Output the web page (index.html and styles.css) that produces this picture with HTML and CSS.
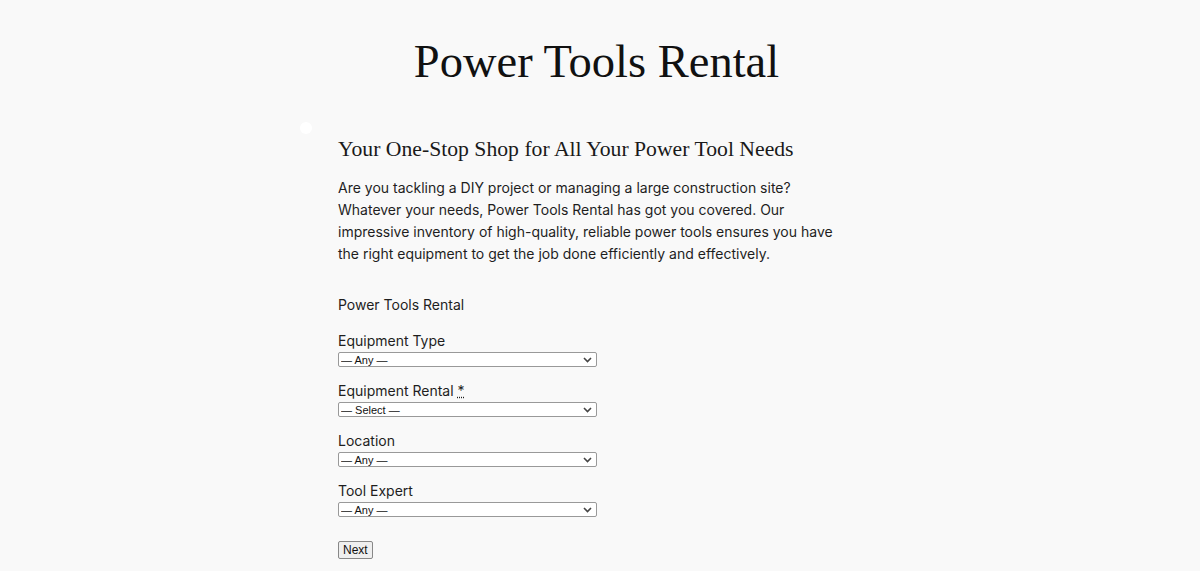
FILE: index.html
```html
<!DOCTYPE html>
<html lang="en">
<head>
	<meta charset="UTF-8">
	<title>Power Tools Rental</title>
	<link rel="stylesheet" href="styles.css">
</head>
<body>
	<header class="site-header">
		<h1 class="site-title">Power Tools Rental</h1>
	</header>
	<main class="content">
		<span class="dot"></span>
		<h2 class="tagline">Your One-Stop Shop for All Your Power Tool Needs</h2>
		<p class="intro">Are you tackling a DIY project or managing a large construction site? Whatever your needs, Power Tools Rental has got you covered. Our impressive inventory of high-quality, reliable power tools ensures you have the right equipment to get the job done efficiently and effectively.</p>

		<form class="rental-form">
			<fieldset>
				<legend>Power Tools Rental</legend>
				<div class="field">
					<label for="type">Equipment Type</label>
					<select id="type"><option>— Any —</option></select>
				</div>
				<div class="field">
					<label for="rental">Equipment Rental <abbr title="required">*</abbr></label>
					<select id="rental"><option>— Select —</option></select>
				</div>
				<div class="field">
					<label for="location">Location</label>
					<select id="location"><option>— Any —</option></select>
				</div>
				<div class="field">
					<label for="expert">Tool Expert</label>
					<select id="expert"><option>— Any —</option></select>
				</div>
			</fieldset>
			<button type="button" class="next">Next</button>
		</form>
	</main>
</body>
</html>
```

FILE: styles.css
```css
body, h1, h2, p, fieldset, legend{
	margin: 0;
	padding: 0;
}
body{
	background: #f9f9f9;
	color: #1e1e1e;
	font-family: Inter, "Liberation Sans", sans-serif;
	font-size: 14px;
}
.site-header{
	padding: 36px 7px 0 0;
	text-align: center;
}
.site-title{
	font-family: "Liberation Serif", serif;
	font-weight: normal;
	font-size: 46.5px;
	line-height: 52px;
	color: #111;
}
.content{
	position: relative;
	width: 524px;
	margin: 0 auto;
	padding-top: 46px;
}
.dot{
	position: absolute;
	left: -38px;
	top: 34px;
	width: 12px;
	height: 12px;
	border-radius: 50%;
	background: #fff;
}
.tagline{
	font-family: "Liberation Serif", serif;
	font-weight: normal;
	font-size: 21.7px;
	line-height: 30px;
	color: #1a1a1a;
}
.intro{
	max-width: 496px;
	margin-top: 13px;
	line-height: 22px;
}
.rental-form{
	margin-top: 29px;
}
fieldset{
	border: 0;
}
legend{
	line-height: 22px;
	margin-bottom: 14px;
}
.field{
	display: flex;
	flex-direction: column;
	align-items: flex-start;
	margin-bottom: 13px;
}
.field label{
	line-height: 22px;
}
abbr{
	text-decoration: underline dotted;
	color: #1e1e1e;
}
select{
	appearance: none;
	width: 259px;
	height: 15px;
	font-size: 11px;
	font-family: "Liberation Sans", sans-serif;
	color: #111;
	padding: 0 0 0 2px;
	border: 1px solid #999;
	border-radius: 2px;
	background: #fff url("data:image/svg+xml,%3Csvg xmlns='http://www.w3.org/2000/svg' width='9' height='6' viewBox='0 0 9 6'%3E%3Cpath d='M1 1l3.5 3.5L8 1' fill='none' stroke='%23444' stroke-width='1.6'/%3E%3C/svg%3E") no-repeat right 4px center;
}
.next{
	margin-top: 11px;
	height: 18px;
	font-family: "Liberation Sans", sans-serif;
	font-size: 12px;
	color: #111;
	padding: 0 4px;
	border: 1px solid #888;
	border-radius: 2px;
	background: #efefef;
}
```
